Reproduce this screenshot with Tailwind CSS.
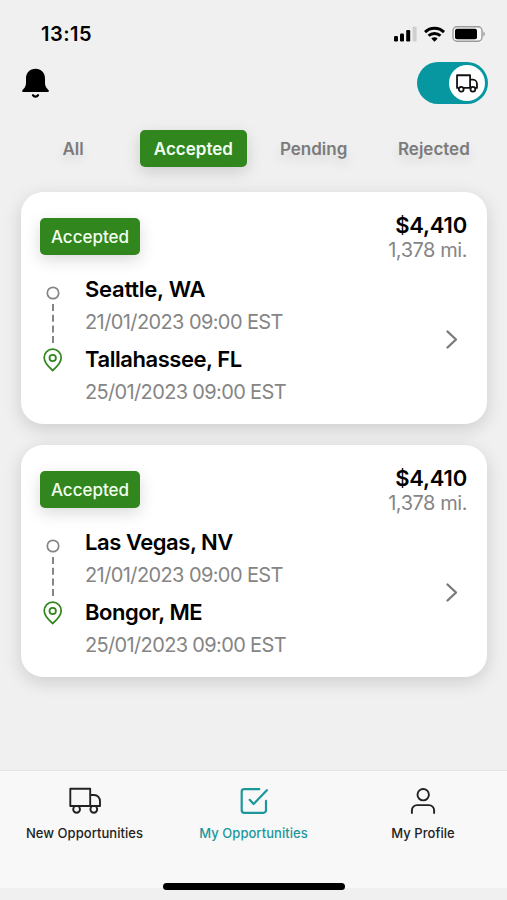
<!DOCTYPE html>
<html lang="en">
<head>
    <meta charset="UTF-8">
    <meta name="viewport" content="width=device-width, initial-scale=1.0">
    <title>My Opportunities</title>
    <script src="https://cdn.jsdelivr.net/npm/@tailwindcss/browser@4"></script>
</head>
<body class="bg-[#f0f0f0] font-['Inter',sans-serif] text-black">
    <div class="flex flex-col w-[507px] h-[900px] overflow-hidden">
        <!-- status bar -->
        <div class="flex h-[62px] shrink-0 items-center justify-between pl-[41px] pr-[21px] pt-[5px]">
            <span class="text-[20px] font-semibold leading-none tracking-[0.5px]">13:15</span>
            <div class="flex items-center gap-[7px]">
                <svg width="23" height="16" viewBox="0 0 23 16">
                    <rect x="0" y="10" width="4" height="5.5" rx="1.2"/>
                    <rect x="6" y="7.5" width="4" height="8" rx="1.2"/>
                    <rect x="12.200" y="4" width="4" height="11.5" rx="1.2"/>
                    <rect x="18.600" y="0.5" width="4" height="15" rx="1.2" fill="#cfcfcf"/>
                </svg>
                <svg width="21" height="16" viewBox="0 0 21 16" fill="none" stroke="#000" stroke-width="3">
                    <path d="M1 6.1a13.6 13.6 0 0 1 19 0"/>
                    <path d="M4.6 9.8a8.4 8.4 0 0 1 11.8 0"/>
                    <path d="M10.5 15.8 7.3 12.5a4.6 4.6 0 0 1 6.4 0z" fill="#000" stroke="none"/>
                </svg>
                <svg width="34" height="16" viewBox="0 0 34 16">
                    <rect x="1" y="0.8" width="29" height="14.4" rx="4" fill="#fafafa" stroke="#9a9a9a" stroke-width="1.4"/>
                    <rect x="3" y="2.8" width="22" height="10.4" rx="2"/>
                    <path d="M31.3 5.5c2 .8 2 4.2 0 5z" fill="#9a9a9a"/>
                </svg>
            </div>
        </div>

        <!-- header -->
        <div class="flex h-[42px] shrink-0 items-center justify-between pl-[22px] pr-[19px]">
            <svg width="27" height="30" viewBox="0 0 27 30">
                <path d="M13.500 .8C8 .8 4 4.800 4 10.200v4.300c0 3-.7 4.500-2.300 6.200L.6 22c-.8.800-.5 1.900.5 1.900h24.800c1 0 1.300-1.100.5-1.900l-1.100-1.300c-1.600-1.700-2.300-3.200-2.300-6.200v-4.300C23 4.800 19 .8 13.500.8z"/>
                <path d="M11 27.200c1 1.800 4 1.800 5 0" fill="none" stroke="#000" stroke-width="2.300" stroke-linecap="round"/>
            </svg>
            <button class="flex h-[42px] w-[71px] items-center justify-end rounded-full bg-[#0797a0] pr-[3px]">
                <span class="flex size-9 items-center justify-center rounded-full bg-white">
                    <svg width="22" height="19" viewBox="0 0 32 27" fill="none" stroke="#111" stroke-width="2.600" stroke-linejoin="round">
                        <path d="M3.800 20H1.500V1.500h19V20h-9M20.500 8h4.200c3.500 0 5.800 3 5.800 6.300V20h-2"/>
                        <circle cx="7.600" cy="21.800" r="3.500"/>
                        <circle cx="24.600" cy="21.800" r="3.500"/>
                    </svg>
                </span>
            </button>
        </div>

        <!-- filter tabs -->
        <div class="grid grid-cols-4 mt-[26px] mx-[13px] h-[37px] shrink-0 text-[17px] font-semibold text-[#7b7b7b]">
            <button class="flex items-center justify-center pt-0.5 [text-shadow:0_6px_12px_#0000001f]">All</button>
            <button class="mx-auto flex w-[107px] items-center justify-center rounded-[5px] bg-[#31861d] pt-0.5 text-[#f3fff0] shadow-[0_5px_16px_#00000026]">Accepted</button>
            <button class="flex items-center justify-center pt-0.5 [text-shadow:0_6px_12px_#0000001f]">Pending</button>
            <button class="flex items-center justify-center pt-0.5 [text-shadow:0_6px_12px_#0000001f]">Rejected</button>
        </div>

        <!-- loads -->
        <div class="flex flex-1 flex-col gap-[21px] pt-[25px] pl-[21px] pr-5">
            <div class="flex h-[232px] flex-col rounded-[22px] bg-white pl-[19px] pr-5 shadow-[0_5px_18px_#00000026]">
                <div class="flex h-[82px] justify-between">
                    <span class="mt-[26px] flex h-[37px] w-[100px] items-center justify-center rounded-[5px] bg-[#31861d] pt-0.5 text-[17px] font-medium text-[#f3fff0] shadow-[0_5px_16px_#00000026]">Accepted</span>
                    <div class="pt-[21px] text-right">
                        <p class="text-[22px] font-semibold leading-[25px] tracking-[-0.2px]">$4,410</p>
                        <p class="text-[20px] leading-[25px] tracking-[-0.45px] text-[#858585]">1,378 mi.</p>
                    </div>
                </div>
                <div class="flex">
                    <svg class="mt-3 shrink-0" width="25" height="88" viewBox="0 0 25 88" fill="none">
                        <circle cx="13" cy="7" r="5.700" stroke="#858585" stroke-width="1.700"/>
                        <path d="M13 18v39" stroke="#858585" stroke-width="2" stroke-dasharray="7 3.700"/>
                        <path d="M12.700 84.500C7 79.500 4.200 76 4.200 71.700a8.500 8.500 0 0 1 17 0c0 4.300-2.800 7.800-8.500 12.800z" stroke="#31861d" stroke-width="1.700" stroke-linejoin="round"/>
                        <circle cx="12.700" cy="72" r="3.200" stroke="#31861d" stroke-width="1.800"/>
                    </svg>
                    <div class="ml-5 -mt-px flex-1">
                        <p class="text-[22px] font-semibold leading-[32px] tracking-[-0.25px]">Seattle, WA</p>
                        <p class="mt-px text-[20px] leading-[32px] tracking-[-0.6px] text-[#858585]">21/01/2023 09:00 EST</p>
                        <p class="mt-[5px] text-[22px] font-semibold leading-[32px] tracking-[-0.45px]">Tallahassee, FL</p>
                        <p class="mt-px text-[20px] leading-[32px] tracking-[-0.65px] text-[#858585]">25/01/2023 09:00 EST</p>
                    </div>
                    <svg class="mt-[55px] mr-[9px] shrink-0" width="13" height="21" viewBox="0 0 13 21" fill="none" stroke="#7b7b7b" stroke-width="2.400" stroke-linecap="round" stroke-linejoin="round">
                        <path d="M2.500 2.500l8.500 8-8.500 8"/>
                    </svg>
                </div>
            </div>

            <div class="flex h-[232px] flex-col rounded-[22px] bg-white pl-[19px] pr-5 shadow-[0_5px_18px_#00000026]">
                <div class="flex h-[82px] justify-between">
                    <span class="mt-[26px] flex h-[37px] w-[100px] items-center justify-center rounded-[5px] bg-[#31861d] pt-0.5 text-[17px] font-medium text-[#f3fff0] shadow-[0_5px_16px_#00000026]">Accepted</span>
                    <div class="pt-[21px] text-right">
                        <p class="text-[22px] font-semibold leading-[25px] tracking-[-0.2px]">$4,410</p>
                        <p class="text-[20px] leading-[25px] tracking-[-0.45px] text-[#858585]">1,378 mi.</p>
                    </div>
                </div>
                <div class="flex">
                    <svg class="mt-3 shrink-0" width="25" height="88" viewBox="0 0 25 88" fill="none">
                        <circle cx="13" cy="7" r="5.700" stroke="#858585" stroke-width="1.700"/>
                        <path d="M13 18v39" stroke="#858585" stroke-width="2" stroke-dasharray="7 3.700"/>
                        <path d="M12.700 84.500C7 79.500 4.200 76 4.200 71.700a8.500 8.500 0 0 1 17 0c0 4.300-2.800 7.800-8.500 12.800z" stroke="#31861d" stroke-width="1.700" stroke-linejoin="round"/>
                        <circle cx="12.700" cy="72" r="3.200" stroke="#31861d" stroke-width="1.800"/>
                    </svg>
                    <div class="ml-5 -mt-px flex-1">
                        <p class="text-[22px] font-semibold leading-[32px] tracking-[-0.45px]">Las Vegas, NV</p>
                        <p class="mt-px text-[20px] leading-[32px] tracking-[-0.6px] text-[#858585]">21/01/2023 09:00 EST</p>
                        <p class="mt-[5px] text-[22px] font-semibold leading-[32px] tracking-[-0.45px]">Bongor, ME</p>
                        <p class="mt-px text-[20px] leading-[32px] tracking-[-0.65px] text-[#858585]">25/01/2023 09:00 EST</p>
                    </div>
                    <svg class="mt-[55px] mr-[9px] shrink-0" width="13" height="21" viewBox="0 0 13 21" fill="none" stroke="#7b7b7b" stroke-width="2.400" stroke-linecap="round" stroke-linejoin="round">
                        <path d="M2.500 2.500l8.500 8-8.500 8"/>
                    </svg>
                </div>
            </div>
        </div>

        <!-- bottom navigation -->
        <nav class="grid h-[118px] shrink-0 grid-cols-3 border-t border-[#e4e4e4] bg-[#f8f8f8] text-[13px] font-medium tracking-[0.05px] text-[#222]">
            <a class="flex flex-col items-center gap-[11px] pt-4">
                <svg width="32" height="27" viewBox="0 0 32 27" fill="none" stroke="#222" stroke-width="1.900" stroke-linejoin="round">
                    <path d="M1.300 1.800h19.900v17.200H1.300zM21.200 8h4c3.500 0 5.800 3 5.800 6.300V19h-9.800"/>
                    <circle cx="7.600" cy="22.300" r="3.400"/>
                    <circle cx="24.800" cy="22.300" r="3.400"/>
                </svg>
                <span class="leading-4">New Opportunities</span>
            </a>
            <a class="flex flex-col items-center gap-[11px] pt-4 text-[#1c979c]">
                <svg width="28" height="27" viewBox="0 0 28 27" fill="none" stroke="#1c979c" stroke-width="2.200" stroke-linecap="round" stroke-linejoin="round">
                    <path d="M19.300 2.200H4.200a2.500 2.500 0 0 0-2.500 2.500v18.600a2.500 2.500 0 0 0 2.500 2.500h19.300a2.500 2.500 0 0 0 2.500-2.500V13.800"/>
                    <path d="M9.700 12.800l3.900 4.200L26.900 3.200"/>
                </svg>
                <span class="leading-4">My Opportunities</span>
            </a>
            <a class="flex flex-col items-center gap-[11px] pt-4 pl-px">
                <svg width="26" height="27" viewBox="0 0 26 27" fill="none" stroke="#222" stroke-width="1.900" stroke-linecap="round">
                    <circle cx="13.200" cy="7.700" r="5.700"/>
                    <path d="M1.900 26v-2.700a5.200 5.200 0 0 1 5.200-5.200h11.800a5.200 5.200 0 0 1 5.200 5.200V26"/>
                </svg>
                <span class="leading-4">My Profile</span>
            </a>
        </nav>
        <div class="relative h-3 shrink-0">
            <div class="absolute left-[163px] -top-[5px] h-[7px] w-[182px] rounded-full bg-black"></div>
        </div>
    </div>
</body>
</html>
